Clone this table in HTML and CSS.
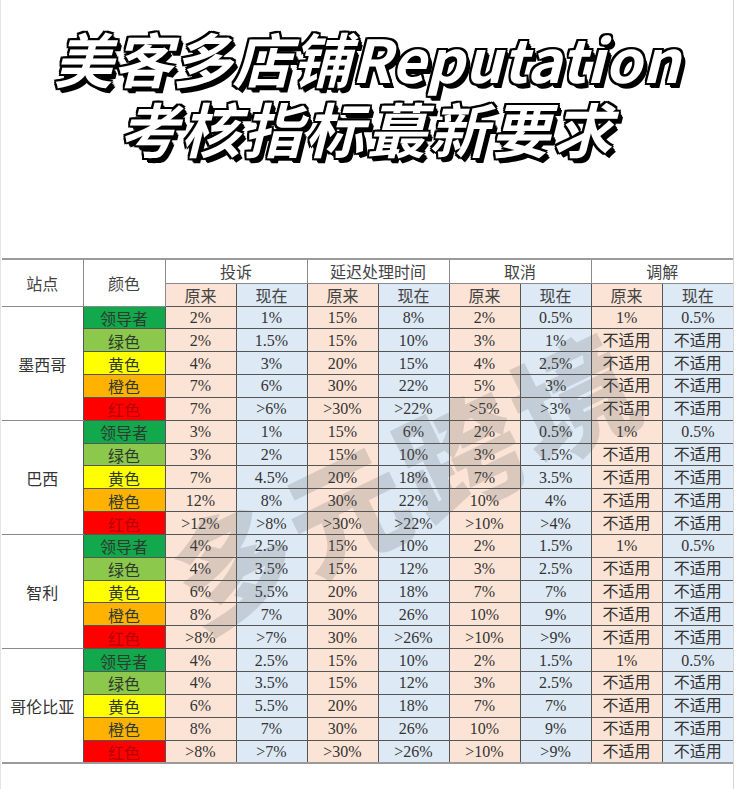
FILE: index.html
```html
<!DOCTYPE html>
<html lang="zh-CN">
<head>
<meta charset="utf-8">
<title>美客多店铺Reputation考核指标蕞新要求</title>
<link rel="stylesheet" href="styles.css">
</head>
<body>
<div class="page">
  <h1 class="title">
    <span class="title-line line1">美客多店铺Reputation</span>
    <span class="title-line line2">考核指标蕞新要求</span>
  </h1>
  <div class="table-wrap">
    <table class="grid">
      <colgroup>
        <col class="c-site"><col class="c-color">
        <col class="c-data"><col class="c-data"><col class="c-data"><col class="c-data">
        <col class="c-data"><col class="c-data"><col class="c-data"><col class="c-data">
      </colgroup>
      <thead>
        <tr class="hrow1">
          <th rowspan="2" class="hsite">站点</th>
          <th rowspan="2" class="hsite">颜色</th>
          <th colspan="2">投诉</th>
          <th colspan="2">延迟处理时间</th>
          <th colspan="2">取消</th>
          <th colspan="2">调解</th>
        </tr>
        <tr class="hrow2">
          <th class="old">原来</th><th class="new">现在</th>
          <th class="old">原来</th><th class="new">现在</th>
          <th class="old">原来</th><th class="new">现在</th>
          <th class="old">原来</th><th class="new">现在</th>
        </tr>
      </thead>
      <tbody>
        <tr class="first"><td rowspan="5" class="site">墨西哥</td><td class="lv leader">领导者</td><td class="old">2%</td><td class="new">1%</td><td class="old">15%</td><td class="new">8%</td><td class="old">2%</td><td class="new">0.5%</td><td class="old">1%</td><td class="new">0.5%</td></tr>
        <tr><td class="lv green">绿色</td><td class="old">2%</td><td class="new">1.5%</td><td class="old">15%</td><td class="new">10%</td><td class="old">3%</td><td class="new">1%</td><td class="old">不适用</td><td class="new">不适用</td></tr>
        <tr><td class="lv yellow">黄色</td><td class="old">4%</td><td class="new">3%</td><td class="old">20%</td><td class="new">15%</td><td class="old">4%</td><td class="new">2.5%</td><td class="old">不适用</td><td class="new">不适用</td></tr>
        <tr><td class="lv orange">橙色</td><td class="old">7%</td><td class="new">6%</td><td class="old">30%</td><td class="new">22%</td><td class="old">5%</td><td class="new">3%</td><td class="old">不适用</td><td class="new">不适用</td></tr>
        <tr><td class="lv red">红色</td><td class="old">7%</td><td class="new">&gt;6%</td><td class="old">&gt;30%</td><td class="new">&gt;22%</td><td class="old">&gt;5%</td><td class="new">&gt;3%</td><td class="old">不适用</td><td class="new">不适用</td></tr>

        <tr class="first"><td rowspan="5" class="site">巴西</td><td class="lv leader">领导者</td><td class="old">3%</td><td class="new">1%</td><td class="old">15%</td><td class="new">6%</td><td class="old">2%</td><td class="new">0.5%</td><td class="old">1%</td><td class="new">0.5%</td></tr>
        <tr><td class="lv green">绿色</td><td class="old">3%</td><td class="new">2%</td><td class="old">15%</td><td class="new">10%</td><td class="old">3%</td><td class="new">1.5%</td><td class="old">不适用</td><td class="new">不适用</td></tr>
        <tr><td class="lv yellow">黄色</td><td class="old">7%</td><td class="new">4.5%</td><td class="old">20%</td><td class="new">18%</td><td class="old">7%</td><td class="new">3.5%</td><td class="old">不适用</td><td class="new">不适用</td></tr>
        <tr><td class="lv orange">橙色</td><td class="old">12%</td><td class="new">8%</td><td class="old">30%</td><td class="new">22%</td><td class="old">10%</td><td class="new">4%</td><td class="old">不适用</td><td class="new">不适用</td></tr>
        <tr><td class="lv red">红色</td><td class="old">&gt;12%</td><td class="new">&gt;8%</td><td class="old">&gt;30%</td><td class="new">&gt;22%</td><td class="old">&gt;10%</td><td class="new">&gt;4%</td><td class="old">不适用</td><td class="new">不适用</td></tr>

        <tr class="first"><td rowspan="5" class="site">智利</td><td class="lv leader">领导者</td><td class="old">4%</td><td class="new">2.5%</td><td class="old">15%</td><td class="new">10%</td><td class="old">2%</td><td class="new">1.5%</td><td class="old">1%</td><td class="new">0.5%</td></tr>
        <tr><td class="lv green">绿色</td><td class="old">4%</td><td class="new">3.5%</td><td class="old">15%</td><td class="new">12%</td><td class="old">3%</td><td class="new">2.5%</td><td class="old">不适用</td><td class="new">不适用</td></tr>
        <tr><td class="lv yellow">黄色</td><td class="old">6%</td><td class="new">5.5%</td><td class="old">20%</td><td class="new">18%</td><td class="old">7%</td><td class="new">7%</td><td class="old">不适用</td><td class="new">不适用</td></tr>
        <tr><td class="lv orange">橙色</td><td class="old">8%</td><td class="new">7%</td><td class="old">30%</td><td class="new">26%</td><td class="old">10%</td><td class="new">9%</td><td class="old">不适用</td><td class="new">不适用</td></tr>
        <tr><td class="lv red">红色</td><td class="old">&gt;8%</td><td class="new">&gt;7%</td><td class="old">30%</td><td class="new">&gt;26%</td><td class="old">&gt;10%</td><td class="new">&gt;9%</td><td class="old">不适用</td><td class="new">不适用</td></tr>

        <tr class="first"><td rowspan="5" class="site">哥伦比亚</td><td class="lv leader">领导者</td><td class="old">4%</td><td class="new">2.5%</td><td class="old">15%</td><td class="new">10%</td><td class="old">2%</td><td class="new">1.5%</td><td class="old">1%</td><td class="new">0.5%</td></tr>
        <tr><td class="lv green">绿色</td><td class="old">4%</td><td class="new">3.5%</td><td class="old">15%</td><td class="new">12%</td><td class="old">3%</td><td class="new">2.5%</td><td class="old">不适用</td><td class="new">不适用</td></tr>
        <tr><td class="lv yellow">黄色</td><td class="old">6%</td><td class="new">5.5%</td><td class="old">20%</td><td class="new">18%</td><td class="old">7%</td><td class="new">7%</td><td class="old">不适用</td><td class="new">不适用</td></tr>
        <tr><td class="lv orange">橙色</td><td class="old">8%</td><td class="new">7%</td><td class="old">30%</td><td class="new">26%</td><td class="old">10%</td><td class="new">9%</td><td class="old">不适用</td><td class="new">不适用</td></tr>
        <tr class="last"><td class="lv red">红色</td><td class="old">&gt;8%</td><td class="new">&gt;7%</td><td class="old">&gt;30%</td><td class="new">&gt;26%</td><td class="old">&gt;10%</td><td class="new">&gt;9%</td><td class="old">不适用</td><td class="new">不适用</td></tr>
      </tbody>
    </table>
    <div class="watermark">多元跨境</div>
  </div>
</div>
</body>
</html>
```

FILE: styles.css
```css
* { box-sizing: border-box; }

html, body {
  margin: 0;
  padding: 0;
  background: #ffffff;
}

.page {
  width: 734px;
  height: 789px;
  border-left: 1px solid #e4e4e4;
  border-right: 1px solid #d6d6d6;
  background: #ffffff;
  overflow: hidden;
}

.title {
  margin: 23px 0 0 0;
  padding: 0;
  height: 140px;
  display: flex;
  flex-direction: column;
  align-items: center;
  font-family: "Noto Sans CJK SC", "Noto Sans", sans-serif;
  font-weight: 700;
  font-style: italic;
  font-size: 59px;
  line-height: 70px;
  color: #ffffff;
  text-shadow:
    -2px -2px 0 #000, 2px -2px 0 #000, -2px 2px 0 #000, 2px 2px 0 #000,
    0 -2px 0 #000, 0 2px 0 #000, -2px 0 0 #000, 2px 0 0 #000,
    3px 3px 0 #000, 3px 4px 0 #000, 4px 5px 0 #000;
}

.title-line {
  display: block;
  white-space: nowrap;
  height: 70px;
}

.line1 { letter-spacing: 0.5px; }
.line2 { letter-spacing: 3px; }

.table-wrap {
  position: relative;
  margin-top: 95px;
  margin-left: 1px;
}

.grid {
  border-collapse: collapse;
  table-layout: fixed;
  width: 731px;
  font-family: "Liberation Serif", "Noto Sans CJK SC", serif;
  font-size: 16px;
  color: #333333;
  border-top: 2px solid #9a9a9a;
  border-bottom: 2px solid #9a9a9a;
}

.c-site { width: 81px; }
.c-color { width: 82px; }
.c-data { width: 71px; }

.grid th,
.grid td {
  padding: 0;
  text-align: center;
  vertical-align: middle;
  border: 1px solid #555555;
  white-space: nowrap;
  overflow: hidden;
  line-height: 16px;
}

.grid th {
  font-family: "Noto Sans CJK SC", sans-serif;
  font-weight: 400;
  font-size: 16px;
  color: #444444;
}

.hrow1 th { height: 24px; background: #ffffff; border-color: #8a8a8a; }
.hrow2 th { height: 23px; }

.grid th.hsite {
  background: #ffffff;
  font-size: 16px;
  border-left: 0;
}

.grid tbody td { height: 22.85px; padding-top: 1px; }

.grid td.site {
  background: #ffffff;
  font-family: "Noto Sans CJK SC", sans-serif;
  font-size: 16px;
  color: #333333;
  border-left: 0;
  border-top: 1px solid #8a8a8a;
  border-bottom: 1px solid #8a8a8a;
}

.old { background: #fbe3d5; }
.new { background: #dde9f5; }

.grid td.lv {
  font-family: "Noto Sans CJK SC", sans-serif;
  font-size: 16px;
  color: #2f3a2f;
}

.leader { background: #12a84c; }
.green { background: #8cc84c; }
.yellow { background: #ffff00; }
.orange { background: #ffb300; }
.grid td.red { background: #ff0000; color: #b30000; }

.grid td:last-child,
.grid th:last-child {
  border-right: 0;
}

.watermark {
  position: absolute;
  left: 402px;
  top: 218px;
  transform: translate(-50%, -50%) rotate(-26deg);
  font-family: "Noto Sans CJK SC", sans-serif;
  font-weight: 900;
  font-size: 120px;
  letter-spacing: 6px;
  line-height: 1;
  color: rgba(95, 95, 95, 0.2);
  white-space: nowrap;
  pointer-events: none;
}
```
